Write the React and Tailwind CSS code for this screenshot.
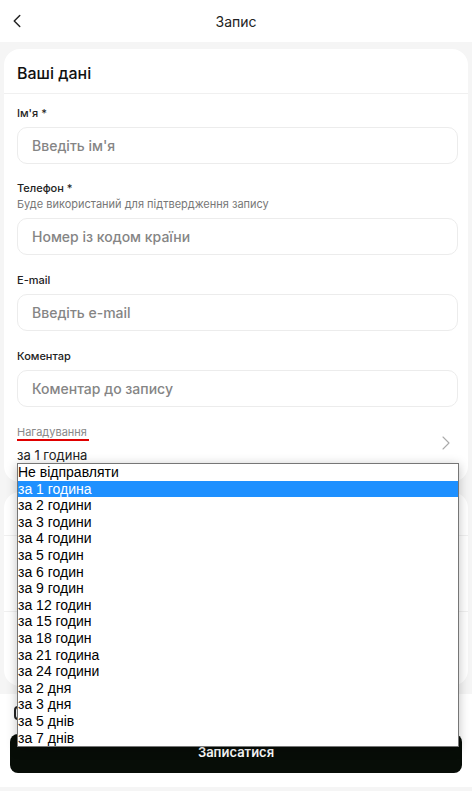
import { ChevronLeft, ChevronRight } from 'lucide-react';

const options = [
  'Не відправляти',
  'за 1 година',
  'за 2 години',
  'за 3 години',
  'за 4 години',
  'за 5 годин',
  'за 6 годин',
  'за 9 годин',
  'за 12 годин',
  'за 15 годин',
  'за 18 годин',
  'за 21 година',
  'за 24 години',
  'за 2 дня',
  'за 3 дня',
  'за 5 днів',
  'за 7 днів',
];

const Field = ({ label, hint, placeholder, className = '' }) => (
  <div className={className}>
    <div className="text-[11px] leading-[14px] font-medium text-[#222]">{label}</div>
    {hint && <div className="mt-[2px] text-[11px] leading-[14px] text-[#777]">{hint}</div>}
    <div className="mt-[7px] h-[37px] rounded-[10px] border border-[#ececec] flex items-center px-[14px] text-[14px] font-medium text-[#858585]">
      {placeholder}
    </div>
  </div>
);

const App = () => {
  return (
    <div className="relative w-[472px] h-[791px] overflow-hidden bg-[#f5f5f5] font-['Inter',sans-serif]">
      <header className="h-[42px] bg-white flex items-center justify-center relative">
        <ChevronLeft className="absolute left-[6px] top-[10px] w-[22px] h-[22px] text-[#222]" strokeWidth={1.6} />
        <span className="text-[14px] text-[#222]">Запис</span>
      </header>

      <div className="px-[4px] pt-[7px]">
        <div className="bg-white rounded-[16px] pb-[16px]">
          <div className="h-[45px] flex items-center pt-[3px] px-[13px] border-b border-[#f0f0f0]">
            <span className="text-[16px] font-medium text-[#111]">Ваші дані</span>
          </div>
          <div className="pl-[13px] pr-[10px]">
            <Field className="pt-[12px]" label="Ім'я *" placeholder="Введіть ім'я" />
            <Field className="pt-[17px]" label="Телефон *" hint="Буде використаний для підтвердження запису" placeholder="Номер із кодом країни" />
            <Field className="pt-[18px]" label="E-mail" placeholder="Введіть e-mail" />
            <Field className="pt-[18px]" label="Коментар" placeholder="Коментар до запису" />
            <div className="pt-[19px] flex items-center justify-between">
              <div>
                <div className="text-[11px] leading-[13px] text-[#888] w-fit border-b-2 border-[#e00000] pr-[2px]">Нагадування</div>
                <div className="mt-[5px] text-[13px] text-[#222]">за 1 година</div>
              </div>
              <ChevronRight className="w-[24px] h-[24px] text-[#aaa] -mt-[6px]" strokeWidth={1.1} />
            </div>
          </div>
        </div>

        <div className="mt-[10px] bg-white rounded-[16px] h-[194px]">
          <div className="h-[44px] border-b border-[#f0f0f0]" />
          <div className="h-[76px] border-b border-[#f0f0f0]" />
        </div>
      </div>

      <div className="mt-[8px] bg-white h-[93px] px-[10px]">
        <div className="pt-[12px] pl-[4px]">
          <div className="w-[14px] h-[14px] rounded-[4px] border-2 border-[#222]" />
        </div>
        <button className="mt-[14px] w-full h-[39px] rounded-[8px] bg-[#070d07] text-white text-[13px] font-semibold">
          Записатися
        </button>
      </div>

      <div
        className="absolute left-[17px] top-[463px] w-[442px] h-[284px] bg-white border border-[#767676] shadow-[0_2px_10px_rgba(0,0,0,0.25)] font-['Liberation_Sans',Arial,sans-serif] text-[14px] text-black"
      >
        {options.map((o, i) => (
          <div
            key={o}
            className={`h-[16.6px] leading-[16.6px] ${i === 1 ? 'bg-[#1e90ff] text-white' : ''}`}
          >
            {o}
          </div>
        ))}
      </div>
    </div>
  );
};

export default App;
